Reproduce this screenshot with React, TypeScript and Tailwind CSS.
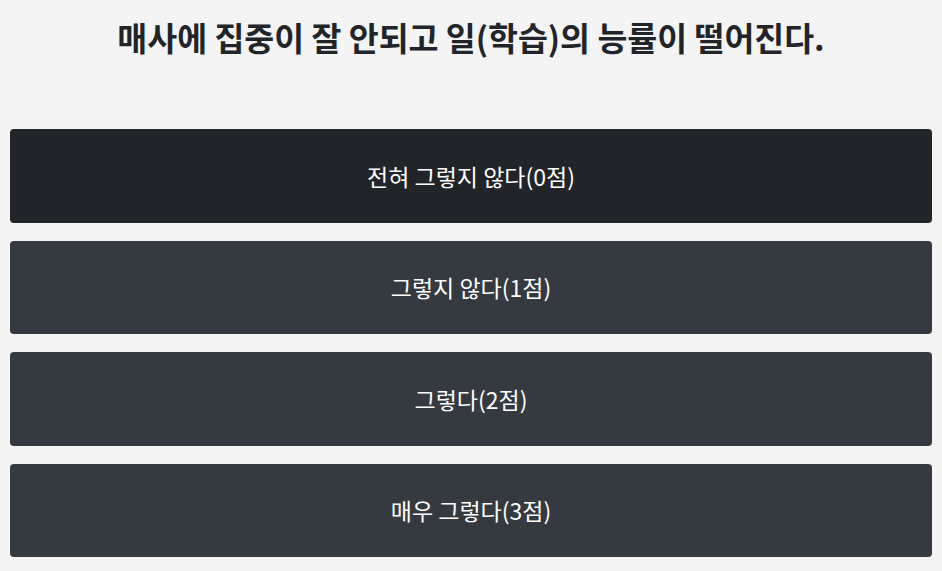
import React from "react";

const options = ["전혀 그렇지 않다(0점)", "그렇지 않다(1점)", "그렇다(2점)", "매우 그렇다(3점)"];

export default function App() {
  return (
    <div
      className="min-h-[571px] w-full bg-[#f4f4f4] px-[10px]"
      style={{ fontFamily: '"Noto Sans CJK KR", "Noto Sans", sans-serif' }}
    >
      <h1 className="pt-[13px] text-center text-[32.5px] font-bold leading-[48px] text-[#212529]">
        매사에 집중이 잘 안되고 일(학습)의 능률이 떨어진다.
      </h1>
      <div className="mt-[68px] flex flex-col gap-[18px]">
        {options.map((o, i) => (
          <button
            key={o}
            className={`flex h-[93.5px] w-full items-center justify-center rounded-[4px] text-[23px] text-white ${
              i === 0 ? "bg-[#212529]" : "bg-[#343a40]"
            }`}
          >
            {o}
          </button>
        ))}
      </div>
    </div>
  );
}
